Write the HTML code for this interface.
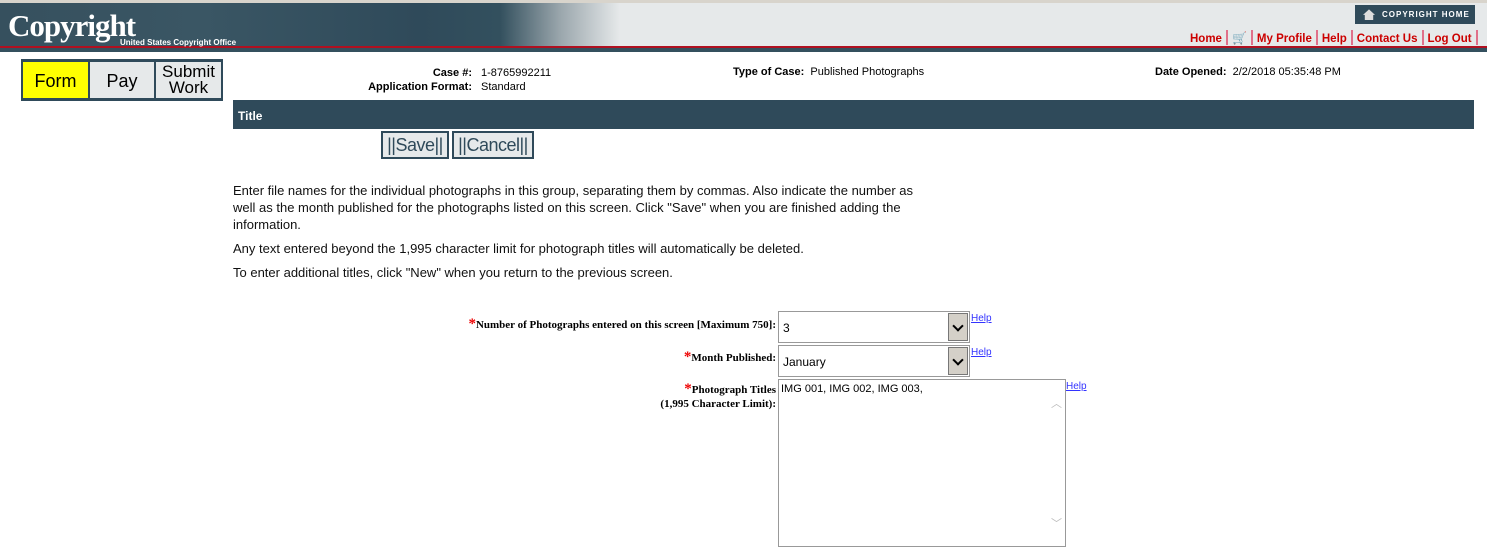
<!DOCTYPE html>
<html><head><style>
body{margin:0;width:1487px;height:555px;overflow:hidden;background:#fff;font-family:"Liberation Sans",Arial,sans-serif;position:relative}
.a{position:absolute}
.nav a{color:#c00;font-weight:bold;font-size:11.5px;text-decoration:none}
.sep{display:inline-block;width:2px;height:15px;background:#e0708a;vertical-align:middle;margin:0 4px}
.btn{position:absolute;border:2px solid #2f4a5a;background:#e6e9ea;font-size:18px;color:#2f4a5a;height:24px;line-height:24px;top:131px;box-sizing:content-box;letter-spacing:-0.5px}
.lbl{position:absolute;font-family:"Liberation Serif",serif;font-weight:bold;font-size:11px;text-align:right;color:#000}
.st{color:#e00;font-size:15px}
.sel{position:absolute;left:778px;width:192px;height:32px;border:1px solid #999;box-sizing:border-box;font-size:12px}
.sel span{position:absolute;left:4px;top:9px}
.sel i{position:absolute;right:1px;top:1px;width:20px;height:28px;background:#d4d0c8;border:1px solid #777;box-sizing:border-box}
.sel i:after{content:"";position:absolute;left:5px;top:8px;width:6px;height:6px;border-right:2px solid #000;border-bottom:2px solid #000;transform:rotate(45deg)}
.help{position:absolute;font-size:10px;color:#33f;text-decoration:underline}
p{margin:0}
</style></head><body>
<div class="a" style="left:0;top:0;width:1487px;height:3px;background:#d8d4cc"></div>
<div class="a" style="left:0;top:3px;width:1487px;height:44px;background:linear-gradient(90deg,#36505e 0,#3a5664 200px,#2f4a5a 420px,#33505e 500px,#9aa6ac 560px,#e6e9ea 620px,#e6e9ea 100%)"></div>
<div class="a" style="left:0;top:46px;width:1487px;height:2px;background:#b01020"></div>
<div class="a" style="left:0;top:48px;width:1487px;height:4px;background:#34505e"></div>
<div class="a" style="left:8px;top:8px;color:#fff;font-family:'Liberation Serif',serif;font-weight:bold;font-size:31px;letter-spacing:-1px">Copyright</div>
<div class="a" style="left:120px;top:38px;color:#fff;font-weight:bold;font-size:8px">United States Copyright Office</div>
<div class="a" style="left:1355px;top:5px;width:120px;height:19px;background:#2f4a5a;color:#fff;font-size:8px;letter-spacing:1px;line-height:19px;font-weight:bold"><span style="display:inline-block;width:12px;height:11px;background:#ddd;margin:0 7px 0 8px;vertical-align:middle;clip-path:polygon(50% 0,100% 50%,85% 50%,85% 100%,15% 100%,15% 50%,0 50%)"></span>COPYRIGHT HOME</div>
<div class="a nav" style="left:1190px;top:29px;white-space:nowrap"><a>Home</a><span class="sep"></span><span style="color:#5a5;font-size:12px">🛒</span><span class="sep"></span><a>My Profile</a><span class="sep"></span><a>Help</a><span class="sep"></span><a>Contact Us</a><span class="sep"></span><a>Log Out</a><span class="sep"></span></div>

<div class="a" style="left:21px;top:59px;width:202px;height:42px;background:#2f4a5a"></div>
<div class="a" style="left:23px;top:62px;width:65px;height:36px;background:#ff0;font-size:18px;text-align:center;line-height:38px">Form</div>
<div class="a" style="left:90px;top:62px;width:64px;height:36px;background:#e6e9ea;font-size:18px;text-align:center;line-height:38px">Pay</div>
<div class="a" style="left:156px;top:62px;width:65px;height:36px;background:#e6e9ea;font-size:17px;text-align:center;line-height:16px;padding-top:2px;box-sizing:border-box">Submit<br>Work</div>

<div class="a" style="left:300px;top:66px;font-size:11px;line-height:14px;text-align:right;width:172px"><b>Case #:</b><br><b>Application Format:</b></div>
<div class="a" style="left:481px;top:66px;font-size:11px;line-height:14px">1-8765992211<br>Standard</div>
<div class="a" style="left:733px;top:66px;font-size:11px"><b>Type of Case:</b>&nbsp; Published Photographs</div>
<div class="a" style="left:1155px;top:66px;font-size:11px"><b>Date Opened:</b>&nbsp; 2/2/2018 05:35:48 PM</div>

<div class="a" style="left:233px;top:100px;width:1241px;height:29px;background:#2f4a5a;color:#fff;font-weight:bold;font-size:12px;line-height:32px;padding-left:5px;box-sizing:border-box">Title</div>
<div class="btn" style="left:381px;width:64px;text-align:center">||Save||</div>
<div class="btn" style="left:452px;width:78px;text-align:center">||Cancel||</div>

<div class="a" style="left:233px;top:182px;width:760px;font-size:13px;line-height:17px;color:#111;white-space:nowrap">
<p>Enter file names for the individual photographs in this group, separating them by commas. Also indicate the number as<br>well as the month published for the photographs listed on this screen. Click "Save" when you are finished adding the<br>information.</p>
<p style="margin-top:7px">Any text entered beyond the 1,995 character limit for photograph titles will automatically be deleted.</p>
<p style="margin-top:7px">To enter additional titles, click "New" when you return to the previous screen.</p>
</div>

<div class="lbl" style="left:400px;top:316px;width:376px"><span class="st">*</span>Number of Photographs entered on this screen [Maximum 750]:</div>
<div class="sel" style="top:311px"><span>3</span><i></i></div>
<div class="help" style="left:971px;top:313px">Help</div>
<div class="lbl" style="left:400px;top:349px;width:376px"><span class="st">*</span>Month Published:</div>
<div class="sel" style="top:345px"><span>January</span><i></i></div>
<div class="help" style="left:971px;top:347px">Help</div>
<div class="lbl" style="left:400px;top:382px;width:376px;line-height:14px"><span class="st">*</span>Photograph Titles<br>(1,995 Character Limit):</div>
<div class="a" style="left:778px;top:379px;width:288px;height:168px;border:1px solid #999;box-sizing:border-box;font-size:11px;padding:3px 2px">IMG 001, IMG 002, IMG 003,</div>
<div class="a" style="left:1051px;top:395px;color:#bbb;font-size:11px">︿</div>
<div class="a" style="left:1051px;top:515px;color:#bbb;font-size:11px">﹀</div>
<div class="help" style="left:1066px;top:381px">Help</div>
</body></html>
